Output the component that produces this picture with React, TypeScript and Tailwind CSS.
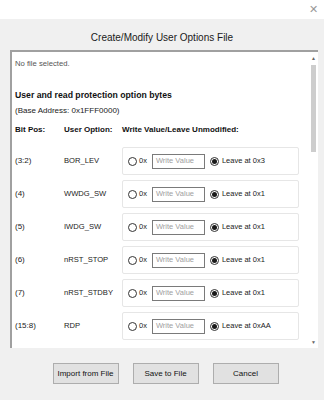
import React from "react";

// Параметры опций: позиция бита, имя и значение по умолчанию
type OptionRow = { bits: string; name: string; leave: string };

const rows: OptionRow[] = [
  { bits: "(3:2)", name: "BOR_LEV", leave: "0x3" },
  { bits: "(4)", name: "WWDG_SW", leave: "0x1" },
  { bits: "(5)", name: "IWDG_SW", leave: "0x1" },
  { bits: "(6)", name: "nRST_STOP", leave: "0x1" },
  { bits: "(7)", name: "nRST_STDBY", leave: "0x1" },
  { bits: "(15:8)", name: "RDP", leave: "0xAA" },
];

function Radio({ checked }: { checked?: boolean }) {
  return (
    <span className="flex h-[9px] w-[9px] shrink-0 items-center justify-center rounded-full border border-[#333]">
      {checked && <span className="h-[5px] w-[5px] rounded-full bg-[#1a1a1a]" />}
    </span>
  );
}

function Row({ row }: { row: OptionRow }) {
  return (
    <div className="flex items-center text-[8px] leading-[10px] text-[#222]">
      <div className="w-[49px]">{row.bits}</div>
      <div className="w-[58px] text-[7.6px]">{row.name}</div>
      <div className="flex h-[28px] w-[177px] items-center rounded-[2px] border border-[#e6e6e6] pl-[5px] text-[7.5px]">
        <Radio />
        <span className="ml-[2px]">0x</span>
        <div className="ml-[5px] flex h-[15px] w-[53px] items-center border border-[#7a7a7a] pl-[3px] text-[#a0a0a0]">
          Write Value
        </div>
        <span className="ml-[5px]">
          <Radio checked />
        </span>
        <span className="ml-[3px]">Leave at {row.leave}</span>
      </div>
    </div>
  );
}

export default function App() {
  return (
    <div className="flex h-[400px] w-[324px] flex-col bg-[#f0f0f0] font-['Liberation_Sans',Arial,sans-serif]">
      <div className="flex h-[19px] items-center justify-end bg-white pr-[6px] text-[11px] text-[#999]">✕</div>
      <div className="flex h-[31px] items-center justify-center pt-[6px] text-[10px] text-[#1a1a1a]">
        Create/Modify User Options File
      </div>
      <div className="ml-[10px] flex h-[298px] w-[308px] border-l-2 border-t-2 border-[#a0a0a0]">
        <div className="flex-1 bg-white pl-[3px] pt-[7px]">
          <div className="text-[7.7px] leading-[10px] text-[#555]">No file selected.</div>
          <div className="mt-[20px] text-[8.7px] font-bold leading-[12px] text-[#111]">
            User and read protection option bytes
          </div>
          <div className="mt-[5px] text-[8px] leading-[10px] text-[#222]">(Base Address: 0x1FFF0000)</div>
          <div className="mt-[9px] flex text-[8px] font-bold leading-[10px] text-[#111]">
            <div className="w-[49px]">Bit Pos:</div>
            <div className="w-[58px]">User Option:</div>
            <div>Write Value/Leave Unmodified:</div>
          </div>
          <div className="mt-[12px] flex flex-col gap-[5px]">
            {rows.map((r) => (
              <Row key={r.name} row={r} />
            ))}
          </div>
        </div>
        <div className="flex w-[9px] flex-col items-center bg-white">
          <span className="mt-[3px] text-[5px] leading-[6px] text-[#666]">▲</span>
          <div className="mt-[4px] h-[87px] w-[5px] bg-[#cdcdcd]" />
          <div className="flex-1" />
          <span className="mb-[3px] text-[5px] leading-[6px] text-[#666]">▼</span>
        </div>
      </div>
      <div className="mt-[15px] flex justify-center gap-[14px] pl-[7px] text-[8px] text-[#111]">
        <button className="h-[21px] w-[66px] border border-[#adadad] bg-[#e1e1e1]">Import from File</button>
        <button className="h-[21px] w-[66px] border border-[#adadad] bg-[#e1e1e1]">Save to File</button>
        <button className="h-[21px] w-[66px] border border-[#adadad] bg-[#e1e1e1]">Cancel</button>
      </div>
    </div>
  );
}
